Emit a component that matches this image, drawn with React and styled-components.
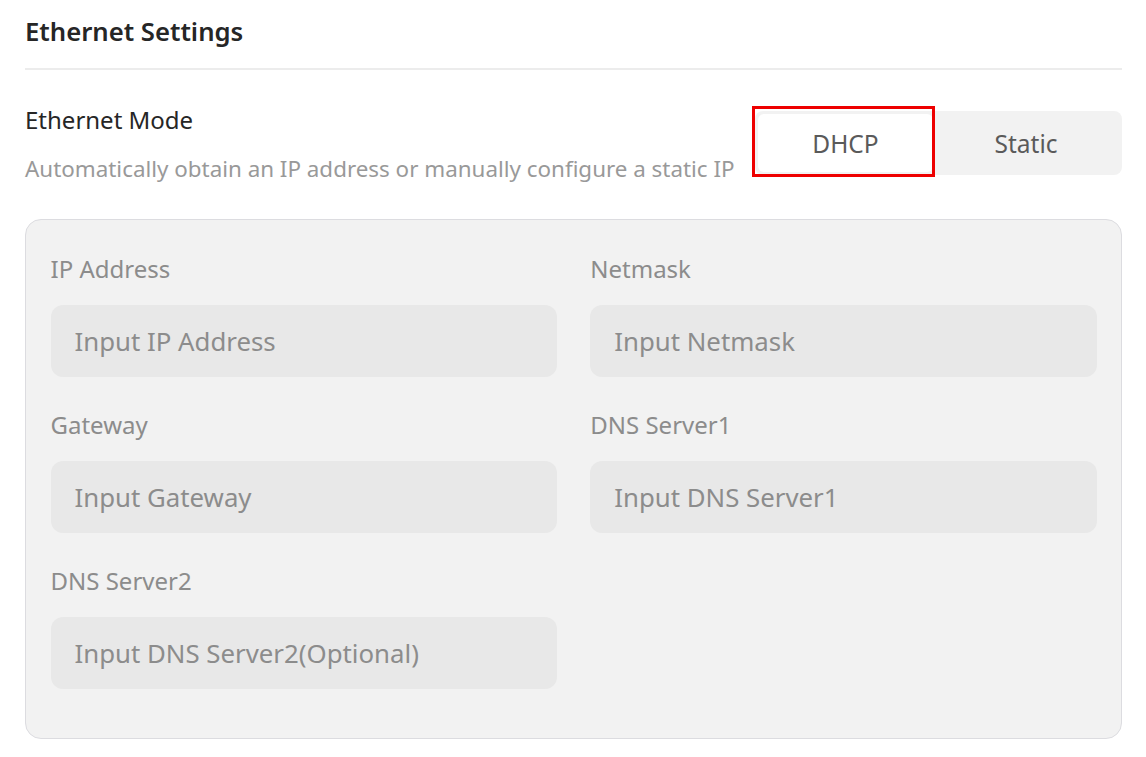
import React from "react";
import styled, { createGlobalStyle } from "styled-components";

const Global = createGlobalStyle`
  html, body { margin: 0; padding: 0; background: #ffffff; }
  body { font-family: "Noto Sans", "Open Sans", sans-serif; }
  * { box-sizing: border-box; }
`;

const Page = styled.div`
  width: 1146px;
  padding: 0 24px 0 25px;
`;

const Title = styled.h1`
  margin: 0;
  height: 70px;
  display: flex;
  align-items: center;
  padding-bottom: 6px;
  font-size: 25.7px;
  font-weight: 600;
  color: #262626;
  border-bottom: 2px solid #ececec;
`;

const ModeRow = styled.div`
  display: flex;
  justify-content: space-between;
  align-items: flex-start;
  padding-top: 34px;
`;

const ModeText = styled.div`
  display: flex;
  flex-direction: column;
  gap: 17px;
`;

const ModeTitle = styled.div`
  font-size: 24px;
  line-height: 32px;
  color: #262626;
`;

const ModeDesc = styled.div`
  font-size: 22.4px;
  line-height: 32px;
  color: #999999;
`;

const Segmented = styled.div`
  margin-top: 7px;
  width: 367px;
  height: 64px;
  padding: 3px;
  background: #f2f2f2;
  border-radius: 8px;
  display: grid;
  grid-template-columns: 175px 1fr;
`;

const Segment = styled.div`
  position: relative;
  display: flex;
  align-items: center;
  justify-content: center;
  border-radius: 6px;
  font-size: 24.5px;
  color: #5a5a5a;
  background: ${(p) => (p.$active ? "#ffffff" : "transparent")};
`;

const Highlight = styled.div`
  position: absolute;
  left: -6px;
  top: -8px;
  right: -2px;
  bottom: -5px;
  border: 3px solid #ee0000;
  pointer-events: none;
`;

const Card = styled.div`
  margin-top: 34px;
  border: 1.5px solid #dcdce0;
  border-radius: 16px;
  background: #f2f2f2;
  padding: 32.5px 24px 49.5px 24.5px;
  display: grid;
  grid-template-columns: 1fr 1fr;
  column-gap: 33px;
  row-gap: 32px;
`;

const Field = styled.div`
  display: flex;
  flex-direction: column;
  gap: 20px;
`;

const Label = styled.div`
  font-size: 24px;
  line-height: 32px;
  color: #8c8c8c;
`;

const InputBox = styled.div`
  height: 72px;
  border-radius: 12px;
  background: #e8e8e8;
  display: flex;
  align-items: center;
  padding-left: 24px;
  font-size: 25.8px;
  color: #8c8c8c;
`;

const fields = [
  ["IP Address", "Input IP Address"],
  ["Netmask", "Input Netmask"],
  ["Gateway", "Input Gateway"],
  ["DNS Server1", "Input DNS Server1"],
  ["DNS Server2", "Input DNS Server2(Optional)"],
];

export default function App() {
  return (
    <>
      <Global />
      <Page>
        <Title>Ethernet Settings</Title>
        <ModeRow>
          <ModeText>
            <ModeTitle>Ethernet Mode</ModeTitle>
            <ModeDesc>Automatically obtain an IP address or manually configure a static IP</ModeDesc>
          </ModeText>
          <Segmented>
            <Segment $active>
              DHCP
              <Highlight />
            </Segment>
            <Segment>Static</Segment>
          </Segmented>
        </ModeRow>
        <Card>
          {fields.map(([label, ph]) => (
            <Field key={label}>
              <Label>{label}</Label>
              <InputBox>{ph}</InputBox>
            </Field>
          ))}
        </Card>
      </Page>
    </>
  );
}
